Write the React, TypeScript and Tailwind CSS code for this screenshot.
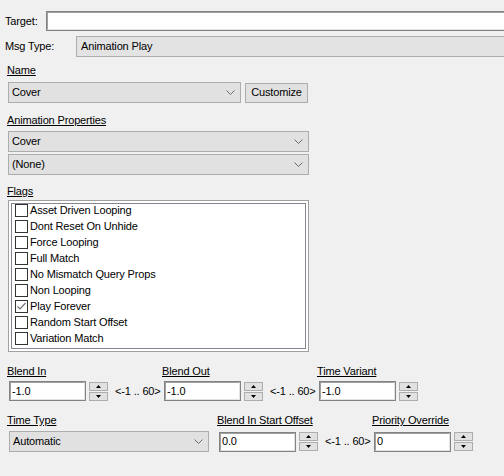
import React from "react";

function Chevron() {
  return (
    <svg width="9" height="5" viewBox="0 0 9 5" className="shrink-0">
      <polyline points="0.5,0.5 4.5,4.5 8.5,0.5" fill="none" stroke="#6a6a6a" strokeWidth="1" />
    </svg>
  );
}

function Combo({ text, className }: { text: string; className: string }) {
  return (
    <div className={"flex h-[21px] items-center justify-between border border-[#adadad] bg-[#e1e1e1] pl-[3px] pr-[5px] " + className}>
      <span className="leading-[13px]">{text}</span>
      <Chevron />
    </div>
  );
}

function TextBox({ value, className }: { value: string; className: string }) {
  return (
    <div className={"h-[20px] border border-[#828282] " + className}>
      <div className="flex h-full items-center border-t border-l border-t-[#a0a0a0] border-l-[#a0a0a0] border-b border-r border-b-[#e3e3e3] border-r-[#e3e3e3] bg-white pl-[1px]">
        <span className="leading-[13px]">{value}</span>
      </div>
    </div>
  );
}

function Spinner() {
  return (
    <div className="flex w-[19px] shrink-0 flex-col gap-[1px] self-start">
      <div className="flex h-[9px] items-center justify-center border border-[#adadad] bg-[#e1e1e1]">
        <svg width="5" height="3" viewBox="0 0 5 3">
          <polygon points="0,3 2.5,0 5,3" fill="#000" />
        </svg>
      </div>
      <div className="flex h-[9px] items-center justify-center border border-[#adadad] bg-[#e1e1e1]">
        <svg width="5" height="3" viewBox="0 0 5 3">
          <polygon points="0,0 5,0 2.5,3" fill="#000" />
        </svg>
      </div>
    </div>
  );
}

function Range({ className }: { className: string }) {
  return <div className={"shrink-0 leading-[13px] " + className}>{"<-1 .. 60>"}</div>;
}

const flags: [string, boolean][] = [
  ["Asset Driven Looping", false],
  ["Dont Reset On Unhide", false],
  ["Force Looping", false],
  ["Full Match", false],
  ["No Mismatch Query Props", false],
  ["Non Looping", false],
  ["Play Forever", true],
  ["Random Start Offset", false],
  ["Variation Match", false],
];

export default function App() {
  return (
    <div className="h-[476px] w-[504px] overflow-hidden bg-[#f0f0f0] font-['Liberation_Sans',Arial,sans-serif] text-[11px] tracking-[-0.15px] text-black">
      {/* Target */}
      <div className="flex items-center pl-[5px] pt-[11px]">
        <div className="w-[41px] shrink-0 leading-[13px]">Target:</div>
        <div className="h-[20px] w-[480px] shrink-0 border border-[#828282]">
          <div className="h-full border-t border-l border-t-[#a0a0a0] border-l-[#a0a0a0] border-b border-b-[#e3e3e3] bg-white" />
        </div>
      </div>
      {/* Msg Type */}
      <div className="mt-[5px] flex items-center pl-[5px]">
        <div className="w-[71px] shrink-0 leading-[13px]">Msg Type:</div>
        <div className="flex h-[21px] w-[460px] shrink-0 items-center border border-[#adadad] bg-[#e3e3e3] pl-[4px]">
          <span className="leading-[13px]">Animation Play</span>
        </div>
      </div>
      {/* Name */}
      <div className="mt-[7px] pl-[7px] leading-[13px] underline">Name</div>
      <div className="mt-[5px] flex items-center gap-[4px] pl-[8px]">
        <Combo text="Cover" className="w-[233px]" />
        <div className="flex h-[20px] w-[63px] items-center justify-center border border-[#adadad] bg-[#e1e1e1]">
          <span className="leading-[13px]">Customize</span>
        </div>
      </div>
      {/* Animation Properties */}
      <div className="mt-[11px] pl-[7px] leading-[13px] underline">Animation Properties</div>
      <div className="mt-[4px] flex flex-col gap-[2px] pl-[8px]">
        <Combo text="Cover" className="w-[301px]" />
        <Combo text="(None)" className="w-[301px]" />
      </div>
      {/* Flags */}
      <div className="mt-[10px] pl-[7px] leading-[13px] underline">Flags</div>
      <div className="mt-[2px] pl-[8px]">
        <div className="h-[152px] w-[301px] border border-[#a0a0a0] bg-white p-[2px]">
          <div className="h-full border border-[#828790] bg-white pl-[3px]">
            {flags.map(([label, checked]) => (
              <div key={label} className="flex h-[16px] items-start">
                <div className="h-[13px] w-[13px] shrink-0 border border-[#333333] bg-white">
                  {checked && (
                    <svg width="11" height="11" viewBox="0 0 11 11">
                      <polyline points="1.5,5.5 4,8 9.5,2" fill="none" stroke="#707070" strokeWidth="1.2" />
                    </svg>
                  )}
                </div>
                <span className="ml-[2px] leading-[13px]">{label}</span>
              </div>
            ))}
          </div>
        </div>
      </div>
      {/* Blend row labels */}
      <div className="mt-[13px] flex pl-[7px] leading-[13px]">
        <div className="w-[155px] shrink-0"><span className="underline">Blend In</span></div>
        <div className="w-[155px] shrink-0"><span className="underline">Blend Out</span></div>
        <div className="shrink-0"><span className="underline">Time Variant</span></div>
      </div>
      <div className="mt-[3px] flex items-center pl-[9px]">
        <TextBox value="-1.0" className="w-[77px] shrink-0" />
        <div className="ml-[3px]"><Spinner /></div>
        <Range className="w-[56px] pl-[7px]" />
        <TextBox value="-1.0" className="w-[77px] shrink-0" />
        <div className="ml-[3px]"><Spinner /></div>
        <Range className="w-[56px] pl-[7px]" />
        <TextBox value="-1.0" className="w-[77px] shrink-0" />
        <div className="ml-[3px]"><Spinner /></div>
      </div>
      {/* Time row labels */}
      <div className="mt-[13px] flex pl-[7px] leading-[13px]">
        <div className="w-[210px] shrink-0"><span className="underline">Time Type</span></div>
        <div className="w-[155px] shrink-0"><span className="underline">Blend In Start Offset</span></div>
        <div className="shrink-0"><span className="underline">Priority Override</span></div>
      </div>
      <div className="mt-[4px] flex items-center pl-[9px]">
        <Combo text="Automatic" className="w-[200px] shrink-0" />
        <TextBox value="0.0" className="ml-[10px] w-[77px] shrink-0" />
        <div className="ml-[3px]"><Spinner /></div>
        <Range className="w-[56px] pl-[7px]" />
        <TextBox value="0" className="w-[77px] shrink-0" />
        <div className="ml-[3px]"><Spinner /></div>
      </div>
    </div>
  );
}
